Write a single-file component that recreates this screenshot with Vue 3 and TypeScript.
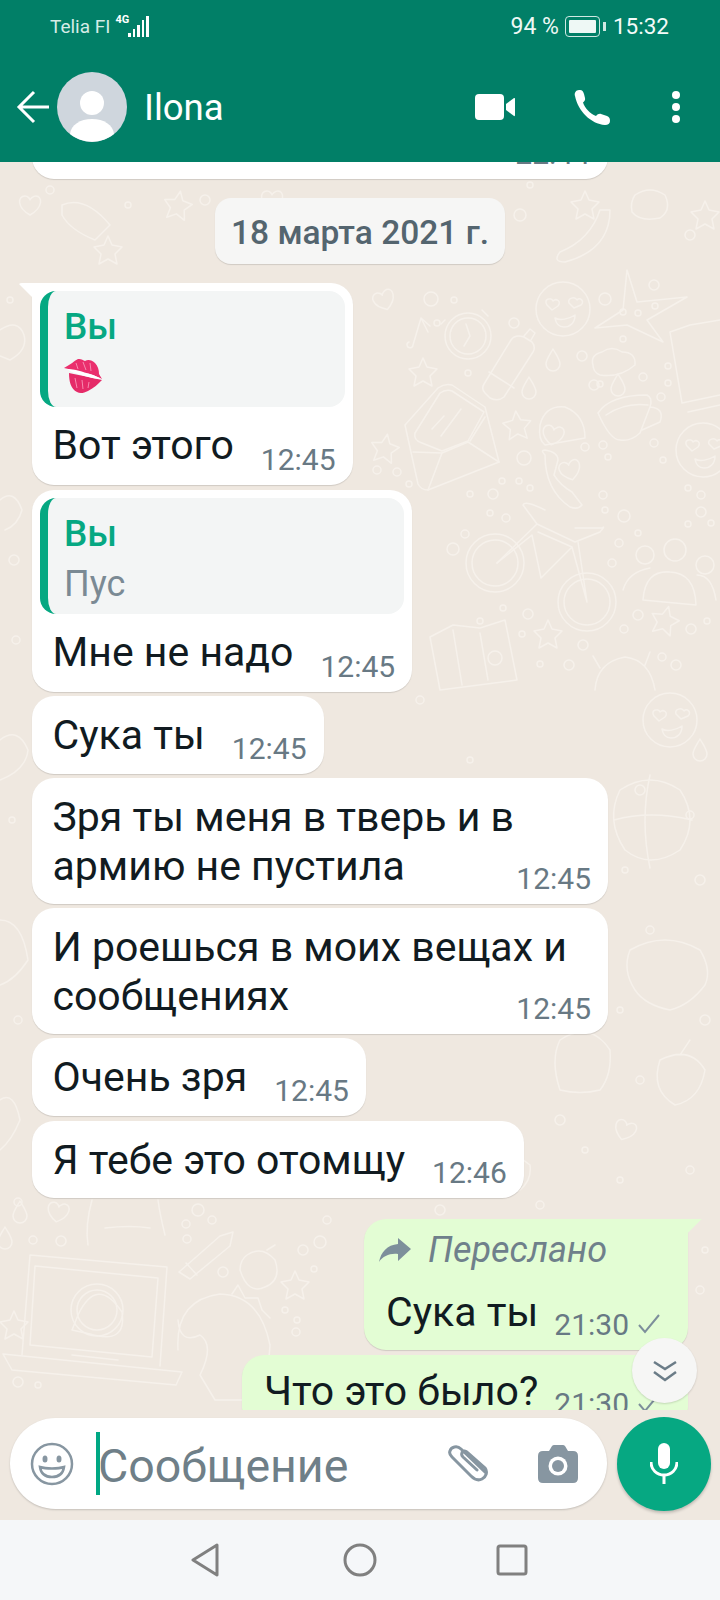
<script setup lang="ts">
interface Message {
  text: string;
  time: string;
  wide?: boolean;
}

const messages: Message[] = [
  { text: "Сука ты", time: "12:45" },
  { text: "Зря ты меня в тверь и в\nармию не пустила", time: "12:45", wide: true },
  { text: "И роешься в моих вещах и\nсообщениях", time: "12:45", wide: true },
  { text: "Очень зря", time: "12:45" },
  { text: "Я тебе это отомщу", time: "12:46" },
];

// small rings scattered over the wallpaper: x, y, r
const rings: number[][] = [
  [431, 299, 7], [454, 300, 3], [437, 323, 3], [514, 323, 5], [605, 299, 6], [654, 285, 5],
  [623, 312, 3], [638, 313, 3], [655, 306, 3], [623, 339, 3], [582, 356, 5], [668, 366, 3],
  [643, 377, 4], [600, 384, 3], [594, 385, 5], [661, 397, 4], [668, 383, 3], [468, 373, 3],
  [377, 470, 4], [397, 472, 4], [409, 484, 3], [524, 458, 7], [502, 481, 3], [519, 481, 3],
  [530, 488, 3], [585, 447, 4], [603, 445, 4], [608, 457, 3], [654, 443, 4], [663, 460, 3],
  [470, 494, 3], [493, 494, 5], [490, 513, 3], [506, 518, 4], [603, 495, 4], [605, 510, 3],
  [624, 516, 6], [688, 488, 3], [701, 495, 4], [701, 512, 5], [688, 524, 3], [711, 523, 3],
  [465, 534, 4], [453, 549, 6], [619, 543, 4], [638, 533, 3], [612, 563, 4], [480, 621, 3],
  [503, 608, 3], [528, 614, 5], [638, 615, 5], [624, 629, 4], [707, 621, 3], [691, 629, 5],
  [522, 634, 3], [583, 645, 5], [540, 664, 3], [569, 665, 5], [495, 658, 7], [662, 657, 4],
  [676, 665, 5], [18, 1202, 4], [33, 1240, 4], [61, 1241, 5], [198, 1210, 6], [186, 1224, 4],
  [212, 1220, 4], [187, 1239, 4], [223, 1272, 5], [303, 1250, 5], [320, 1242, 6], [327, 1220, 4],
  [314, 1269, 3], [285, 1310, 3], [297, 1320, 3], [296, 1332, 4], [18, 1382, 5], [38, 1385, 3],
  [640, 790, 5], [690, 815, 4], [625, 870, 3], [700, 880, 5], [650, 930, 4], [620, 1010, 3],
  [705, 1020, 5], [640, 1080, 4], [560, 1120, 5], [585, 1150, 3], [690, 1170, 4], [620, 1180, 3],
  [16, 640, 4], [12, 820, 3], [18, 1020, 4], [10, 300, 3], [14, 560, 5], [395, 1180, 3],
  [440, 1210, 5], [540, 1205, 4], [700, 1290, 4], [705, 1250, 3], [420, 700, 4], [470, 760, 3],
  [50, 190, 4], [128, 205, 3], [205, 200, 5], [520, 215, 6], [530, 185, 3], [690, 235, 5],
];

// hand-placed doodles, page coordinates
const doodles: string[] = [
  // envelope
  "M405 425L438 388Q445 383 452 385L485 407L499 462L428 490Q421 490 418 484Z",
  "M413 452L442 453L468 442L499 462M442 453L428 490M485 417L470 441",
  "M415 433L440 393Q446 389 452 391L484 412L468 441L442 451L422 443Q413 440 415 433Z",
  "M432 429L444 416M441 436L461 409",
  // music note
  "M413 345L421 318L430 326M413 345a3 3 0 1 1-4-3M421 318L428 332",
  // water bottle
  "M484 384L511 340Q515 334 524 337L532 342Q536 347 533 352L504 397Q498 402 490 398L485 393Q481 389 484 384ZM489 372L514 388M524 336L530 329L535 333L531 340",
  // clock
  "M445 320L441 324M482 310L488 316M466 324L470 336L464 346",
  // plane
  "M595 328L623 310L627 270L637 302L687 297L647 320L663 342L627 325Z",
  // cloud
  "M593 365Q590 355 602 352Q612 345 622 352Q636 352 635 365Q620 378 600 375Q593 372 593 365Z",
  // cup
  "M598 413Q610 395 647 395Q653 398 650 407L640 433Q630 442 620 440Q610 440 598 413ZM650 407Q665 408 660 422L642 430",
  "M606 415Q625 402 648 405",
  // hooded head + heart
  "M540 425Q545 405 565 407Q585 415 585 438L545 445Q538 440 540 425Z",
  // phone handset
  "M545 455Q540 450 545 450Q558 452 558 460L554 475Q560 485 572 492L582 505Q578 510 570 507Q545 490 545 455Z",
  // bicycle frame
  "M497 563L537 524L523 505Q525 500 545 510M537 524L575 542L600 532Q606 525 602 528L575 528",
  "M538 532L572 547L541 578L532 535L497 563M572 547L587 602L578 542",
  // notebook on the right edge
  "M670 332L690 325L720 320M670 332L682 403L720 395M688 412L720 405",
  // map
  "M430 637L453 625L480 628L505 620L517 680L440 690Z",
  "M453 630L462 685M480 633L488 680",
  // android
  "M595 690Q597 662 625 657Q650 660 655 690M600 668L593 656M645 665L650 652",
  // people
  "M643 600Q645 570 670 572Q695 573 696 605ZM623 590Q628 572 650 568M697 575Q712 575 716 600",
  // laptop
  "M22 1355L30 1255L167 1267L160 1366M35 1266L158 1278L152 1357L30 1345Z",
  "M3 1354L182 1372L176 1385L12 1370ZM72 1355L118 1360",
  "M72 1330L78 1315Q97 1275 122 1312Q127 1345 90 1334Z",
  // dino
  "M178 1350Q175 1300 220 1294Q260 1295 270 1345Q268 1380 255 1400L215 1400L200 1375Q215 1345 200 1335Q180 1345 178 1320",
  "M232 1294L238 1285L245 1298L258 1298L262 1310L270 1318",
  // pencil
  "M179 1272L220 1236L233 1232L230 1246L190 1279Z M186 1263L197 1275",
  // apple
  "M247 1255Q262 1245 275 1260Q282 1280 265 1287Q248 1295 240 1270Q240 1260 247 1255Z M267 1250L275 1245",
  // bear feet above the laptop
  "M88 1245Q85 1225 92 1200M165 1235Q160 1215 158 1200M105 1228Q130 1225 150 1228",
  // left-edge shapes
  "M0 330Q18 318 24 335Q28 350 10 360L0 356M0 500Q14 488 22 510Q18 525 5 530",
  "M0 740Q18 726 28 750Q26 770 0 780M0 920Q22 920 28 960Q15 980 0 985",
  "M0 1100Q14 1090 20 1120Q12 1140 0 1150",
  // right side, below the bubbles
  "M620 790Q650 770 680 790Q700 820 680 850Q650 870 625 850Q605 820 620 790ZM614 820Q650 810 692 820M650 775Q640 820 650 868",
  "M630 950Q665 930 700 950Q712 970 705 985Q690 1005 670 1010Q645 1005 635 990Q622 970 630 950Z",
  "M660 1060Q690 1045 705 1070Q700 1100 675 1105Q650 1090 660 1060ZM680 1055L690 1040",
  "M560 1040Q590 1020 610 1050Q612 1075 600 1090Q580 1095 560 1090Q550 1060 560 1040Z",
  "M470 1160Q500 1140 530 1165Q532 1180 520 1190Q495 1200 470 1195Q462 1178 470 1160Z",
  // around the date
  "M610 210Q610 250 565 262Q552 262 560 252Q590 240 600 210Z",
  "M635 195Q650 185 665 195Q672 210 660 218Q640 222 632 212Q630 202 635 195Z",
  "M62 205Q85 195 110 225L95 240Q70 230 62 215Z",
];

// little repeated shapes: symbol id, x, y, rotation
const stamps: [string, number, number, number][] = [
  ["star", 423, 372, 0], ["star", 385, 448, 10], ["star", 517, 425, -5], ["star", 665, 620, 15],
  ["star", 548, 634, 0], ["star", 295, 1285, 0], ["star", 14, 1325, 0], ["star", 660, 1280, 10],
  ["star", 178, 205, 10], ["star", 108, 250, 0], ["star", 585, 205, 0], ["star", 705, 215, 0],
  ["heart", 384, 300, -20], ["heart", 570, 470, -15], ["heart", 553, 435, 10], ["heart", 58, 1212, 10],
  ["heart", 30, 205, 0], ["heart", 625, 1130, 20], ["heart", 272, 200, 0],
  ["drop", 553, 360, 0], ["drop", 529, 388, 0], ["drop", 618, 385, 0], ["drop", 20, 1212, 0],
  ["drop", 5, 1238, 0], ["drop", 700, 750, 0],
  ["face", 703, 450, 0], ["face", 563, 309, 0], ["face", 670, 720, 0],
];
</script>

<template>
  <div class="screen">
    <header class="appbar">
      <div class="status">
        <div class="status-left">
          <span class="carrier">Telia FI</span>
          <span class="net">4G</span>
          <span class="bars">
            <i style="height: 4px"></i>
            <i style="height: 8px"></i>
            <i style="height: 12px"></i>
            <i style="height: 17px"></i>
            <i style="height: 21px"></i>
          </span>
        </div>
        <div class="status-right">
          <span class="percent">94 %</span>
          <span class="battery"><b></b></span>
          <span class="clock">15:32</span>
        </div>
      </div>
      <div class="toolbar">
        <svg class="back" width="34" height="34" viewBox="0 0 34 34" fill="none" stroke="#fff" stroke-width="3">
          <path d="M33 17H3M18 2L3 17l15 15" />
        </svg>
        <svg class="avatar" width="70" height="70" viewBox="0 0 70 70">
          <circle cx="35" cy="35" r="35" fill="#cfd6dd" />
          <circle cx="35" cy="31" r="12" fill="#fff" />
          <path d="M13 62c1-9 10-15 22-15s21 6 22 15a35 35 0 0 1-44 0z" fill="#fff" />
        </svg>
        <span class="name">Ilona</span>
        <div class="actions">
          <svg width="42" height="28" viewBox="0 0 42 28" fill="#fff">
            <rect x="1" y="1" width="29" height="26" rx="4" />
            <path d="M32 11l8-6q1-.5 1 1v16q0 1.500-1 1l-8-6z" />
          </svg>
          <svg class="phone" width="38" height="36" viewBox="0 0 38 36" fill="#fff">
            <path d="M2 7c-1-3 1-6 4-6 3-.5 4 1 5 4l1 4c.5 2-.5 3-2 4.500 2 6 7 11 13 13.500 1.500-1.500 3-2.500 5-2l6 2c2 1 3 2 3 5 0 2.500-2 4-5 4C18 35 5 22 2 7z" />
          </svg>
          <span class="dots"><i></i><i></i><i></i></span>
        </div>
      </div>
    </header>

    <main class="chat">
      <svg class="wallpaper" width="720" height="1358" viewBox="0 162 720 1358" fill="none" stroke="#f6f1eb" stroke-width="1.500" stroke-linecap="round" stroke-linejoin="round">
        <defs>
          <symbol id="star" overflow="visible"><path d="M0-14L4-5L14-3L7 4L9 14L0 9L-9 14L-7 4L-14-3L-4-5Z" /></symbol>
          <symbol id="heart" overflow="visible"><path d="M0 10C-14 2-12-9-5-9-2-9 0-6 0-5 0-6 3-9 6-9 12-9 14 2 0 10Z" /></symbol>
          <symbol id="drop" overflow="visible"><path d="M0-11C-4-4-7 0-7 4A7 7 0 0 0 7 4C7 0 4-4 0-11Z" /></symbol>
          <symbol id="face" overflow="visible">
            <circle r="27" />
            <path d="M-16-4c-4-6 4-8 6-4 3-3 9 0 5 5l-6 4zM6-6c-2-5 6-7 8-3 3-3 8 1 4 5l-7 3zM-8 9c5 3 14 1 20-3 0 8-5 12-11 12-5 0-8-3-9-9z" />
          </symbol>
        </defs>
        <circle v-for="(r, i) in rings" :key="'r' + i" :cx="r[0]" :cy="r[1]" :r="r[2]" />
        <path v-for="(d, i) in doodles" :key="'d' + i" :d="d" />
        <use
          v-for="(s, i) in stamps"
          :key="'s' + i"
          :href="'#' + s[0]"
          :transform="`translate(${s[1]} ${s[2]}) rotate(${s[3]})`"
        />
        <circle cx="468" cy="336" r="23" /><circle cx="468" cy="336" r="18" />
        <circle cx="495" cy="563" r="29" /><circle cx="495" cy="563" r="23" />
        <circle cx="587" cy="602" r="29" /><circle cx="587" cy="602" r="23" />
        <circle cx="97" cy="1310" r="26" /><circle cx="97" cy="1310" r="20" />
        <circle cx="645" cy="555" r="9" /><circle cx="675" cy="550" r="11" /><circle cx="705" cy="565" r="9" />
      </svg>

      <section class="messages">
        <div class="bubble in cut">
          <span class="time">22:44</span>
        </div>

        <div class="date">18 марта 2021 г.</div>

        <div class="bubble in first reply">
          <div class="quote">
            <div class="quote-from">Вы</div>
            <svg class="lips" width="40" height="36" viewBox="0 0 40 36">
              <path d="M1 10C7 7 11 3 15 1c3-.5 5 1 7 2 3-2 7-1 10 2 3 3 4 7 4 11l3 5C31 17 25 15 19 15 13 13 7 11 1 10z" fill="#ea2f6d" />
              <path d="M6 15c6 1 13 3 20 4 4 1 8 2 13 3-4 4-8 8-14 11-4 2-8 3-11 1-6-3-8-10-8-19z" fill="#e52b68" />
              <path d="M4 11c8 0 16 3 23 5 4 1 8 3 11 5-8 0-16-3-23-5-4-1-8-3-11-5z" fill="#fff" />
              <path d="M13 5l2 6M20 4l3 8M27 5l1 8M12 20l2 10M19 22l1 9M26 24l-1 6" stroke="#f78bb0" stroke-width="1" fill="none" />
            </svg>
          </div>
          <div class="row">
            <span class="text">Вот этого</span>
            <span class="time">12:45</span>
          </div>
        </div>

        <div class="bubble in reply">
          <div class="quote">
            <div class="quote-from">Вы</div>
            <div class="quote-text">Пус</div>
          </div>
          <div class="row">
            <span class="text">Мне не надо</span>
            <span class="time">12:45</span>
          </div>
        </div>

        <div v-for="(m, i) in messages" :key="i" class="bubble in" :class="{ wide: m.wide }">
          <div class="row">
            <span class="text">{{ m.text }}</span>
            <span class="time">{{ m.time }}</span>
          </div>
        </div>

        <div class="bubble out first forwarded">
          <div class="fwd">
            <svg width="34" height="26" viewBox="0 0 34 26" fill="#7d8f9b">
              <path d="M20 1l13 11-13 12v-7C12 16 5 19 1 25 3 15 9 8 20 7z" />
            </svg>
            <em>Переслано</em>
          </div>
          <div class="row">
            <span class="text">Сука ты</span>
            <span class="time">21:30</span>
            <svg class="tick" width="22" height="20" viewBox="0 0 22 20" fill="none" stroke="#7d8f9b" stroke-width="2">
              <path d="M1 11l6 7L21 1" />
            </svg>
          </div>
        </div>

        <div class="bubble out last">
          <div class="row">
            <span class="text">Что это было?</span>
            <span class="time">21:30</span>
            <svg class="tick" width="22" height="20" viewBox="0 0 22 20" fill="none" stroke="#7d8f9b" stroke-width="2">
              <path d="M1 11l6 7L21 1" />
            </svg>
          </div>
        </div>
      </section>

      <button class="to-bottom" type="button">
        <svg width="26" height="22" viewBox="0 0 26 22" fill="none" stroke="#6b7c87" stroke-width="2.500">
          <path d="M2 2l11 7 11-7M2 12l11 8 11-8" />
        </svg>
      </button>

      <footer class="composer">
        <div class="input">
          <svg class="emoji" width="44" height="44" viewBox="0 0 44 44" fill="none" stroke="#8796a1" stroke-width="2.500">
            <circle cx="22" cy="22" r="20" />
            <ellipse cx="15" cy="17" rx="2.500" ry="3.500" fill="#8796a1" stroke="none" />
            <ellipse cx="29" cy="17" rx="2.500" ry="3.500" fill="#8796a1" stroke="none" />
            <path d="M10 25c6 2 18 2 24 0-1 7-6 10-12 10s-11-3-12-10z" />
          </svg>
          <span class="caret"></span>
          <span class="placeholder">Сообщение</span>
          <svg class="clip" width="42" height="38" viewBox="0 0 42 38" fill="none" stroke="#8796a1" stroke-width="3" stroke-linecap="round">
            <path d="M38 28L13 4C9 0 3 2 2 6c-1 2 0 4 2 6l19 19c3 3 7 5 11 3 4-2 6-7 3-11L19 7c-2-2-5-1-5 1-1 2 0 3 1 4l14 13" />
          </svg>
          <svg class="camera" width="40" height="38" viewBox="0 0 40 38">
            <path d="M5 6h6l3-5q1-1 2-1h9q1 0 2 1l3 5h5q5 0 5 5v22q0 5-5 5H5q-5 0-5-5V11q0-5 5-5z" fill="#8796a1" />
            <circle cx="20" cy="21" r="9.500" fill="#fff" />
            <circle cx="20" cy="21" r="6" fill="#8796a1" />
          </svg>
        </div>
        <div class="mic">
          <svg width="28" height="42" viewBox="0 0 28 42" fill="#fff">
            <rect x="8" y="0" width="12" height="26" rx="6" />
            <path d="M1 19c0 8 6 13 13 13s13-5 13-13" fill="none" stroke="#fff" stroke-width="3" />
            <rect x="12.500" y="31" width="3" height="10" />
          </svg>
        </div>
      </footer>
    </main>

    <nav class="navbar">
      <svg width="30" height="34" viewBox="0 0 30 34" fill="none" stroke="#808080" stroke-width="3" stroke-linejoin="round">
        <path d="M27 2L3 17l24 15z" />
      </svg>
      <svg class="home" width="34" height="34" viewBox="0 0 34 34" fill="none" stroke="#808080" stroke-width="3">
        <circle cx="17" cy="17" r="15" />
      </svg>
      <svg width="32" height="32" viewBox="0 0 32 32" fill="none" stroke="#808080" stroke-width="3" stroke-linejoin="round">
        <rect x="2" y="2" width="28" height="28" rx="2" />
      </svg>
    </nav>
  </div>
</template>

<style scoped>
.screen {
  width: 720px;
  height: 1600px;
  display: flex;
  flex-direction: column;
  overflow: hidden;
  font-family: Roboto, "Liberation Sans", sans-serif;
  color: #111b21;
}

.appbar {
  height: 162px;
  flex: none;
  background: #017f67;
  color: #fff;
}
.status {
  height: 52px;
  padding: 0 51px 0 50px;
  display: flex;
  align-items: center;
  justify-content: space-between;
}
.status-left,
.status-right {
  display: flex;
  align-items: center;
}
.carrier {
  font-size: 19px;
  color: #d5ece6;
}
.net {
  font-size: 11px;
  font-weight: 700;
  margin: -13px 0 0 5px;
}
.bars {
  display: flex;
  align-items: flex-end;
  gap: 2px;
  height: 21px;
  margin: 0 0 0 -1px;
}
.bars i {
  width: 2.500px;
  background: #fff;
}
.percent {
  font-size: 23px;
  color: #eef8f5;
}
.battery {
  width: 35px;
  height: 21px;
  margin-left: 6px;
  padding: 3px;
  box-sizing: border-box;
  border: 1.500px solid #cfe9e3;
  border-radius: 4px;
  display: flex;
  position: relative;
}
.battery b {
  flex: 1;
  background: #eef8f5;
  border-radius: 1px;
}
.battery::after {
  content: "";
  position: absolute;
  right: -7px;
  top: 5px;
  width: 3px;
  height: 9px;
  background: #cfe9e3;
}
.clock {
  font-size: 22.500px;
  margin-left: 13px;
  color: #f4fbf9;
}

.toolbar {
  height: 110px;
  display: flex;
  align-items: center;
  padding: 0 0 0 16px;
  box-sizing: border-box;
}
.avatar {
  margin-left: 7px;
}
.name {
  font-size: 36.500px;
  margin-left: 17px;
}
.actions {
  margin-left: auto;
  margin-right: 40px;
  display: flex;
  align-items: center;
  gap: 57px;
}
.phone {
  margin-right: 4px;
}
.dots {
  display: flex;
  flex-direction: column;
  gap: 4px;
}
.dots i {
  width: 8px;
  height: 8px;
  border-radius: 50%;
  background: #fff;
}

.chat {
  flex: 1;
  min-height: 0;
  display: flex;
  flex-direction: column;
  position: relative;
  background: #efe8e0;
}
.wallpaper {
  position: absolute;
  left: 0;
  top: 0;
}
.messages {
  flex: 1;
  min-height: 0;
  overflow: hidden;
  padding: 0 32px;
  display: flex;
  flex-direction: column;
  align-items: flex-start;
  position: relative;
}

.bubble {
  position: relative;
  flex: none;
  box-sizing: border-box;
  background: #fff;
  border-radius: 22px;
  padding: 15px 17px 8px 20.500px;
  margin-bottom: 4.600px;
  box-shadow: 0 1px 1px rgba(0, 0, 0, 0.13);
}
.bubble.cut {
  width: 576px;
  margin-top: -43px;
  margin-bottom: 0;
  height: 60px;
  padding: 0 18px 8px 0;
  display: flex;
  justify-content: flex-end;
  align-items: flex-end;
}
.bubble.wide {
  width: 576px;
}
.bubble.reply {
  padding: 8px 8px 8px 8px;
}
.bubble.first::before {
  content: "";
  position: absolute;
  top: 0;
  width: 24px;
  height: 24px;
  background: inherit;
}
.bubble.in.first {
  border-top-left-radius: 0;
  margin-top: 0;
}
.bubble.in.first::before {
  left: -14px;
  clip-path: polygon(0 0, 100% 0, 100% 100%);
  border-top-left-radius: 4px;
}
.bubble.out {
  align-self: flex-end;
  background: #e3fdd4;
}
.bubble.out.first {
  border-top-right-radius: 0;
  margin-top: 16px;
}
.bubble.out.first::before {
  right: -14px;
  clip-path: polygon(0 0, 100% 0, 0 100%);
}
.bubble.out.forwarded {
  padding: 12px 22px 8px 14px;
}
.bubble.out.last {
  padding: 12px 22px 8px 22px;
}

.date {
  align-self: center;
  margin: 19px 0;
  height: 66px;
  box-sizing: border-box;
  line-height: 66px;
  padding: 2px 16px 0;
  flex: none;
  background: #f6f6f5;
  border-radius: 16px;
  font-size: 33.500px;
  font-weight: 500;
  color: #54656f;
  box-shadow: 0 1px 1px rgba(0, 0, 0, 0.13);
}

.row {
  display: flex;
  align-items: flex-end;
  justify-content: space-between;
}
.reply .row {
  padding: 14px 9px 0 12.500px;
}
.text {
  font-size: 41px;
  line-height: 49px;
  margin-bottom: 5.500px;
  white-space: pre-line;
  margin-right: 27px;
}
.reply .text {
  margin-bottom: 7px;
}
.out .text {
  margin-right: 16px;
}
.wide .row {
  display: block;
}
.wide .text {
  display: block;
  margin-right: 0;
}
.wide .time {
  display: block;
  text-align: right;
  margin-top: -35px;
}
.time {
  font-size: 30px;
  line-height: 34px;
  color: #687984;
  white-space: nowrap;
}
.tick {
  margin: 0 6px 8px 9px;
}

.quote {
  width: 100%;
  height: 116px;
  box-sizing: border-box;
  padding-left: 16px;
  background: #f3f5f5;
  border-left: 8px solid #06a882;
  border-radius: 16px;
  position: relative;
}
.quote-from {
  font-size: 37px;
  line-height: 41px;
  font-weight: 500;
  color: #06a882;
  padding-top: 15px;
}
.quote-text {
  font-size: 36px;
  line-height: 41px;
  color: #7b8a94;
  margin-top: 10px;
}
.lips {
  display: block;
  margin: 11px 0 0 -1px;
}

.fwd {
  display: flex;
  align-items: center;
  gap: 16px;
  color: #6f808b;
  font-size: 36px;
  line-height: 38px;
  margin-bottom: 19px;
}
.forwarded .row {
  padding-left: 8px;
}

.to-bottom {
  position: absolute;
  left: 632px;
  top: 1176px;
  width: 65px;
  height: 65px;
  padding: 0;
  border: none;
  border-radius: 50%;
  background: #f6f6f5;
  box-shadow: 0 1px 2px rgba(0, 0, 0, 0.15);
  display: flex;
  align-items: center;
  justify-content: center;
}

.composer {
  flex: none;
  height: 110px;
  box-sizing: border-box;
  padding: 7px 9px 0 10px;
  display: flex;
  gap: 10px;
  position: relative;
  align-items: flex-start;
}
.input {
  flex: 1;
  height: 91px;
  margin-top: 1px;
  border-radius: 46px;
  background: #fff;
  box-shadow: 0 1px 2px rgba(0, 0, 0, 0.18);
  display: flex;
  align-items: center;
  padding-left: 20px;
  box-sizing: border-box;
}
.caret {
  width: 4px;
  height: 63px;
  background: #00a884;
  margin-left: 22px;
}
.placeholder {
  font-size: 46.500px;
  color: #6f7f88;
  margin: 4px 0 0 -2px;
  white-space: nowrap;
}
.clip {
  margin-left: auto;
}
.camera {
  margin: 0 29px 0 48px;
}
.mic {
  width: 94px;
  height: 94px;
  flex: none;
  border-radius: 50%;
  background: #06a882;
  box-shadow: 0 2px 3px rgba(0, 0, 0, 0.2);
  display: flex;
  align-items: center;
  justify-content: center;
}

.navbar {
  height: 80px;
  flex: none;
  background: #f5f7f9;
  display: flex;
  align-items: center;
  padding-left: 190px;
}
.home {
  margin: 0 119px 0 123px;
}
</style>

<style>
html,
body {
  margin: 0;
  background: #efe8e0;
}
</style>
